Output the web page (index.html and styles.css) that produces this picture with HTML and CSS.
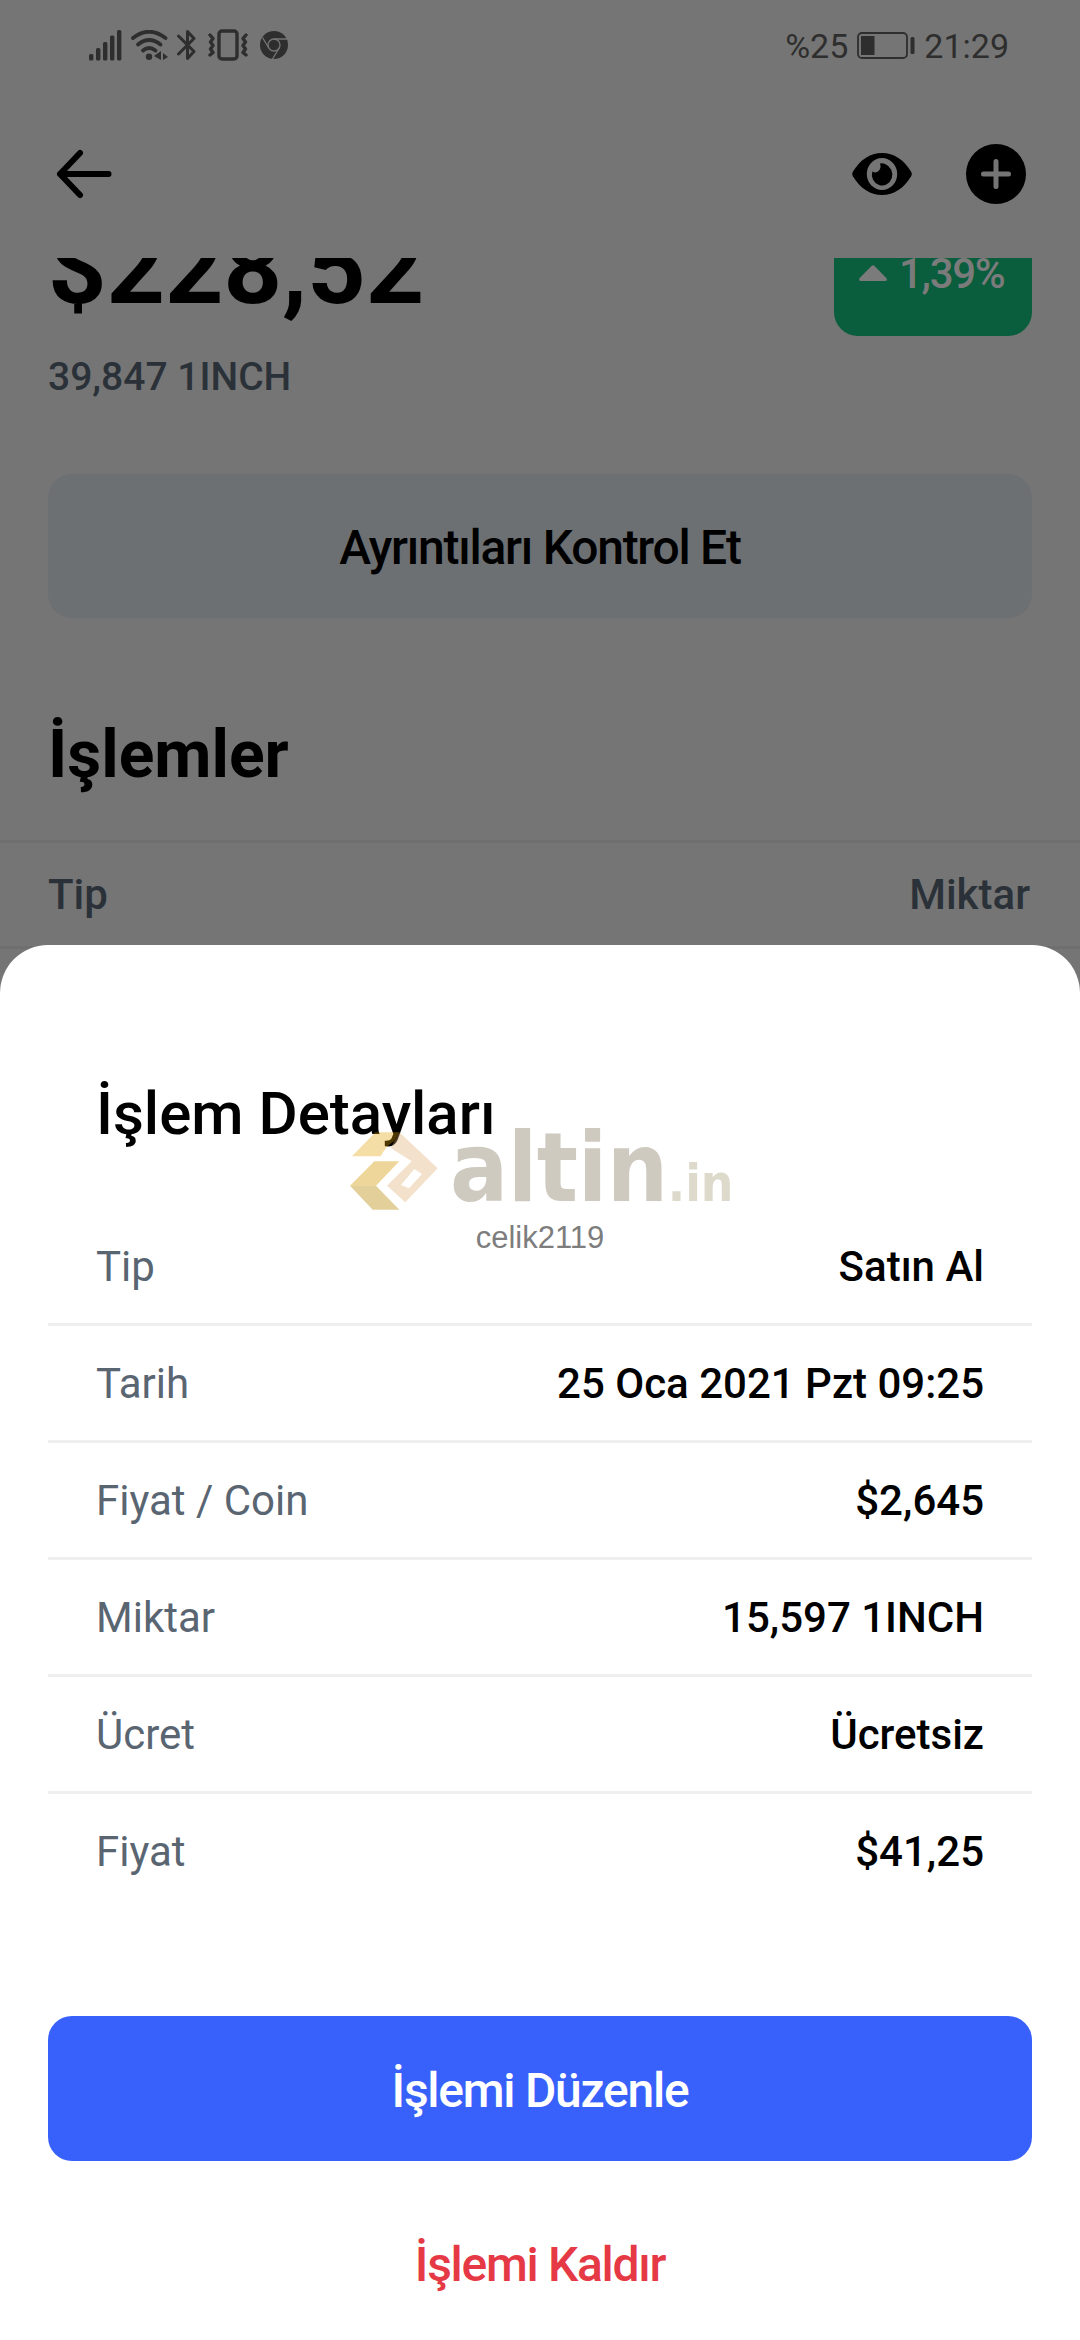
FILE: index.html
```html
<!DOCTYPE html>
<html lang="tr">
<head>
<meta charset="utf-8">
<title>İşlem Detayları</title>
<link rel="stylesheet" href="styles.css">
</head>
<body>
<div class="screen">
  <div class="status">
    <div class="status-icons">
      <svg class="signal" width="33" height="31" viewBox="0 0 33 31"><g fill="currentColor"><rect x="0" y="24" width="4.4" height="6.5" rx="1.6"/><rect x="7" y="18" width="4.4" height="12.5" rx="1.6"/><rect x="14" y="12" width="4.4" height="18.5" rx="1.6"/><rect x="21" y="5.5" width="4.4" height="25" rx="1.6"/><rect x="28" y="0" width="4.4" height="30.5" rx="1.6"/></g></svg>
      <svg class="wifi" width="37" height="31" viewBox="0 0 37 31"><g fill="none" stroke="currentColor" stroke-width="3.8" stroke-linecap="round"><path d="M2 8Q18 -4.5 34.5 8"/><path d="M7 14.5Q18 5.5 29.5 14.5"/><path d="M12 20.5Q18 15.5 24.5 20.5"/></g><circle cx="18" cy="26.8" r="3.2" fill="currentColor"/><path d="M30 21v9l-7-4zM32 23l5 4-5 3z" fill="currentColor"/></svg>
      <svg class="bluetooth" width="20" height="32" viewBox="0 0 20 32"><path d="M1.500 7 17 22.500 10.500 29.500V2.500L17 9.500 1.500 25" fill="none" stroke="currentColor" stroke-width="3" stroke-linejoin="round" stroke-linecap="round"/></svg>
      <svg class="vibrate" width="40" height="32" viewBox="0 0 40 32"><g fill="none" stroke="currentColor" stroke-width="3.4" stroke-linejoin="round" stroke-linecap="round"><rect x="11" y="2" width="18" height="28" rx="3"/><path d="M2 6 5 9.500 2.500 13 5 16.500 2.500 20 5 23.500 2 26M38 6 35 9.500 37.500 13 35 16.500 37.500 20 35 23.500 38 26"/></g></svg>
      <svg class="browser" width="28" height="28" viewBox="0 0 28 28"><circle cx="14" cy="14" r="14" fill="currentColor"/><g fill="none" stroke="#757575" stroke-width="1.3"><circle cx="14" cy="14" r="6"/><path d="M14 8H27M8.800 17 2.500 6.500M19.200 17 12.500 28"/></g></svg>
    </div>
    <div class="status-right">
      <span>%25</span>
      <svg class="battery" width="58" height="27" viewBox="0 0 58 27"><rect x="1" y="1" width="49" height="25" rx="4" fill="none" stroke="currentColor" stroke-width="1.8"/><rect x="4" y="4" width="13.5" height="19" fill="currentColor"/><rect x="53.5" y="5" width="4" height="17" rx="1.5" fill="currentColor"/></svg>
      <span>21:29</span>
    </div>
  </div>

  <div class="toolbar">
    <svg width="56" height="50" viewBox="0 0 56 50"><path d="M52.500 25H4M24 4 4 25 24 46" fill="none" stroke="currentColor" stroke-width="6" stroke-linecap="round" stroke-linejoin="round"/></svg>
    <div class="toolbar-actions">
      <svg width="60" height="42" viewBox="0 0 60 42"><path d="M1 18.500C8 7 18 0 30 0S52 7 59 18.500Q60.500 21 59 23.500C52 35 42 42 30 42S8 35 1 23.500Q-.5 21 1 18.500Z" fill="currentColor"/><ellipse cx="30" cy="21" rx="15.2" ry="16" fill="#757575"/><path d="M28 10.500Q31 10 33.500 11.200A10.200 11 0 1 1 20.300 18.500Q24 20.500 26.600 18Q29.500 15 28 10.500Z" fill="currentColor"/></svg>
      <svg width="60" height="60" viewBox="0 0 60 60"><circle cx="30" cy="30" r="30" fill="currentColor"/><path d="M30 17.500V42.500M17.500 30H42.500" stroke="#757575" stroke-width="5" stroke-linecap="round"/></svg>
    </div>
  </div>

  <div class="content">
    <div class="hero">
      <div class="price">$228,52</div>
      <div class="badge">
        <svg width="28" height="16" viewBox="0 0 28 16"><path d="M12.500 1Q14 -.5 15.500 1L27.300 13Q29 16 26 16H2Q-1 16 .7 13Z" fill="currentColor"/></svg>
        <span>1,39%</span>
      </div>
    </div>
    <div class="holding">39,847 1INCH</div>
    <div class="button button-muted">Ayrıntıları Kontrol Et</div>
    <h2 class="section-title">İşlemler</h2>
    <div class="table-head"><span>Tip</span><span>Miktar</span></div>
  </div>

  <div class="sheet">
    <h1 class="sheet-title">İşlem Detayları</h1>
    <dl class="details">
      <div class="row"><dt>Tip</dt><dd>Satın Al</dd></div>
      <div class="row"><dt>Tarih</dt><dd>25 Oca 2021 Pzt 09:25</dd></div>
      <div class="row"><dt>Fiyat / Coin</dt><dd>$2,645</dd></div>
      <div class="row"><dt>Miktar</dt><dd>15,597 1INCH</dd></div>
      <div class="row"><dt>Ücret</dt><dd>Ücretsiz</dd></div>
      <div class="row"><dt>Fiyat</dt><dd>$41,25</dd></div>
    </dl>
    <div class="button button-primary">İşlemi Düzenle</div>
    <div class="remove">İşlemi Kaldır</div>
  </div>

  <div class="watermark">
    <div class="brand">
      <svg class="brand-mark" width="88" height="78" viewBox="0 0 264 234">
        <path d="M6 73 76 1H148L132 28Q108 42 92 73Z" fill="rgba(226,158,0,.35)"/>
        <path d="M148 1 263 109 166 211 111 161 185 88 122 48ZM153 159 177 169 216 126 193 111Z" fill="rgba(222,170,105,.35)" fill-rule="evenodd"/>
        <path d="M0 161 73 88H148L78 161Z" fill="rgba(212,150,0,.4)"/>
        <path d="M0 161H78L148 233H68Z" fill="rgba(184,135,0,.4)"/>
      </svg>
      <span class="brand-name">altin</span><span class="brand-tld">.in</span>
    </div>
    <div class="user">celik2119</div>
  </div>
</div>
</body>
</html>
```
FILE: styles.css
```css
* { box-sizing: border-box; }

body {
  margin: 0;
  background: #757575;
  font-family: Roboto, "Noto Sans", sans-serif;
  color: #000;
}

h1, h2, dl, dt, dd { margin: 0; }
svg { display: block; flex: none; }

.screen {
  position: relative;
  width: 1080px;
  height: 2340px;
  overflow: hidden;
}

.status {
  display: flex;
  justify-content: space-between;
  align-items: center;
  height: 92px;
  padding: 0 71px 0 89px;
  font-size: 34px;
  line-height: 40px;
  color: #2e2e2e;
}
.status-icons { display: flex; align-items: center; margin-top: -2px; }
.wifi { margin-left: 9px; }
.bluetooth { margin-left: 9px; }
.vibrate { margin-left: 11px; }
.browser { margin-left: 12px; }
.status-right { display: flex; align-items: center; }
.battery { margin: -1px 9px 0; }

.toolbar {
  display: flex;
  justify-content: space-between;
  align-items: center;
  height: 166px;
  padding: 0 54px 2px 56px;
}
.toolbar-actions { display: flex; align-items: center; gap: 54px; }

.content {
  height: 700px;
  overflow: hidden;
}
.hero {
  display: flex;
  justify-content: space-between;
  align-items: flex-start;
  margin-top: -50px;
  padding: 0 48px;
}
.price {
  font-size: 102px;
  font-weight: 700;
  line-height: 120px;
}
.badge {
  display: flex;
  align-items: center;
  gap: 12px;
  width: 198px;
  height: 126px;
  margin: 2px 0 -8px;
  padding-left: 25px;
  border-radius: 24px;
  background: #0a5d3d;
  color: #7b7b7b;
  font-size: 42px;
  font-weight: 500;
  letter-spacing: -1.3px;
}
.holding {
  margin-top: 26px;
  padding: 0 48px;
  font-size: 39px;
  font-weight: 500;
  line-height: 46px;
  color: #2b3138;
}

.button {
  display: flex;
  justify-content: center;
  align-items: center;
  margin: 0 48px;
  border-radius: 24px;
  padding-top: 3px;
  font-size: 48px;
  font-weight: 500;
  letter-spacing: -1.25px;
}
.button-muted {
  height: 144px;
  margin-top: 74px;
  padding-top: 2px;
  background: #6d7073;
}

.section-title {
  margin-top: 98px;
  padding: 0 48px;
  font-size: 66px;
  font-weight: 700;
  line-height: 78px;
}
.table-head {
  display: flex;
  justify-content: space-between;
  align-items: center;
  height: 109px;
  margin-top: 46px;
  padding: 0 50px 0 48px;
  border: solid #6f6f6f;
  border-width: 3px 0;
  font-size: 42px;
  font-weight: 500;
  color: #2b3138;
}

.sheet {
  position: absolute;
  top: 945px;
  left: 0;
  right: 0;
  bottom: 0;
  padding-top: 134px;
  border-radius: 48px 48px 0 0;
  background: #fff;
}
.sheet-title {
  padding: 0 96px;
  font-size: 60px;
  font-weight: 500;
  line-height: 70px;
}
.details { margin: 60px 48px 108px; }
.row {
  display: flex;
  justify-content: space-between;
  align-items: center;
  height: 117px;
  padding: 0 48px;
  border-bottom: 3px solid #efefef;
  font-size: 42px;
}
.row:last-child { height: 114px; border-bottom: 0; }
.row dt { color: #5a6572; }
.row dd { font-weight: 500; }

.button-primary {
  height: 145px;
  background: #3861fb;
  color: #fff;
}
.remove {
  margin-top: 69px;
  font-size: 48px;
  font-weight: 500;
  line-height: 70px;
  letter-spacing: -1.3px;
  text-align: center;
  color: #e63946;
}

.watermark {
  position: absolute;
  top: 1132px;
  left: 350px;
  width: 380px;
}
.brand { display: flex; align-items: baseline; height: 86px; line-height: 72px; }
.brand-mark { align-self: flex-start; }
.brand-name,
.brand-tld {
  font-family: "DejaVu Sans Condensed", "DejaVu Sans", sans-serif;
  font-weight: 700;
  font-stretch: semi-condensed;
}
.brand-name {
  margin-left: 12px;
  font-size: 96px;
  letter-spacing: -0.5px;
  color: rgba(118, 104, 75, .35);
}
.brand-tld {
  font-size: 51px;
  letter-spacing: 0;
  color: rgba(157, 149, 106, .35);
}
.user {
  margin-top: 2px;
  font-family: "Liberation Sans", sans-serif;
  font-size: 31px;
  line-height: 36px;
  text-align: center;
  color: #7d7d7d;
}
```
